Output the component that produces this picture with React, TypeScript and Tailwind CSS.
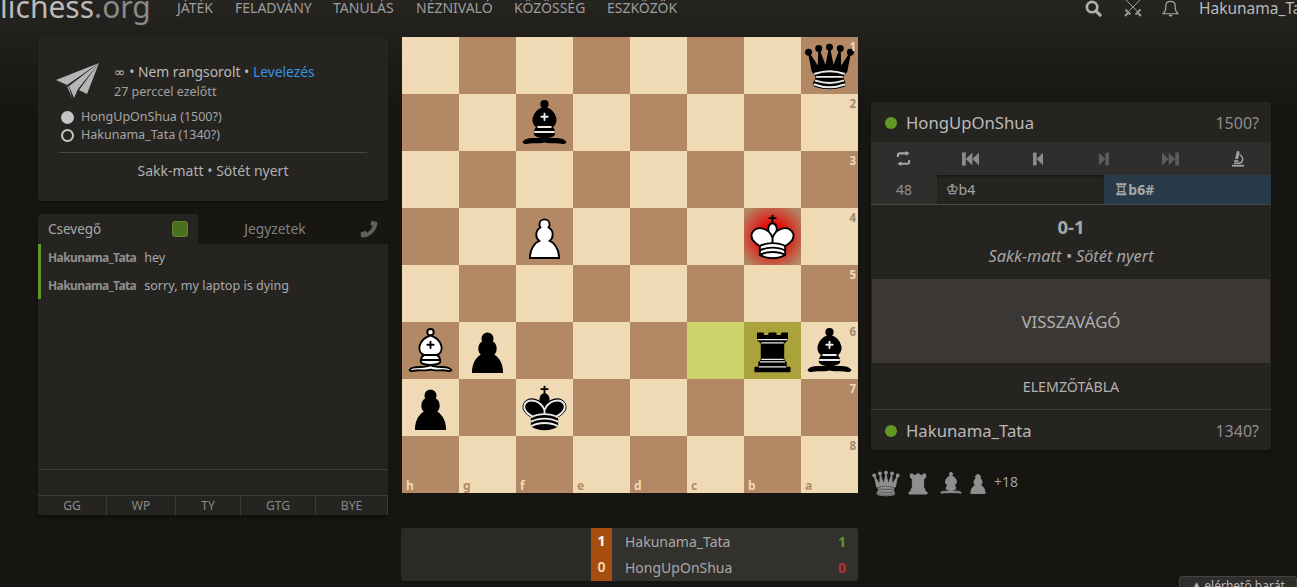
import React from "react";

const font = { fontFamily: '"Noto Sans", "DejaVu Sans", sans-serif' };

type P = { c?: string; i?: string };

const Pawn = ({ c = "#fff", s = "#000" }: { c?: string; s?: string }) => (
  <svg viewBox="0 0 45 45" className="w-full h-full">
    <path d="M22.5 9c-2.21 0-4 1.79-4 4 0 .89.29 1.71.78 2.38C17.33 16.5 16 18.59 16 21c0 2.03.94 3.84 2.41 5.03-3 1.06-7.41 5.55-7.41 13.47h23c0-7.92-4.41-12.41-7.41-13.47 1.47-1.19 2.41-3 2.41-5.03 0-2.41-1.33-4.5-3.28-5.62.49-.67.78-1.49.78-2.38 0-2.21-1.79-4-4-4z" fill={c} stroke={s} strokeWidth="1.5" strokeLinecap="round" />
  </svg>
);

const Bishop = ({ c = "#000", s = "#000", i = "#ececec" }: { c?: string; s?: string; i?: string }) => (
  <svg viewBox="0 0 45 45" className="w-full h-full">
    <g fill="none" fillRule="evenodd" stroke={s} strokeWidth="1.5" strokeLinecap="round" strokeLinejoin="round">
      <g fill={c} strokeLinecap="butt">
        <path d="M9 36c3.39-.97 10.11.43 13.5-2 3.39 2.43 10.11 1.03 13.5 2 0 0 1.65.54 3 2-.68.97-1.65.99-3 .5-3.39-.97-10.11.46-13.5-1-3.39 1.46-10.11.03-13.5 1-1.354.49-2.323.47-3-.5 1.354-1.94 3-2 3-2z" />
        <path d="M15 32c2.5 2.5 12.5 2.5 15 0 .5-1.5 0-2 0-2 0-2.5-2.5-4-2.5-4 5.5-1.5 6-11.5-5-15.5-11 4-10.5 14-5 15.5 0 0-2.5 1.5-2.5 4 0 0-.5.5 0 2z" />
        <path d="M25 8a2.5 2.5 0 1 1-5 0 2.5 2.5 0 1 1 5 0z" />
      </g>
      <path d="M17.5 26h10M15 30h15m-7.5-14.5v5M20 18h5" stroke={i} strokeLinejoin="miter" />
    </g>
  </svg>
);

const KingPath = "M12.5 37c5.5 3.5 14.5 3.5 20 0v-7s9-4.5 6-10.5c-4-6.5-13.5-3.5-16 4V27v-3.5c-2.5-7.5-12-10.5-16-4-3 6 6 10.5 6 10.5v7";
const KingHead = "M22.5 25s4.5-7.5 3-10.5c0 0-1-2.5-3-2.5s-3 2.5-3 2.5c-1.5 3 3 10.5 3 10.5";

const WhiteKing = () => (
  <svg viewBox="0 0 45 45" className="w-full h-full">
    <g fill="none" stroke="#000" strokeWidth="1.5" strokeLinecap="round" strokeLinejoin="round">
      <path d="M22.5 11.63V6M20 8h5" strokeLinejoin="miter" />
      <path d={KingHead} fill="#fff" strokeLinecap="butt" strokeLinejoin="miter" />
      <path d={KingPath} fill="#fff" />
      <path d="M12.5 30c5.5-3 14.5-3 20 0m-20 3.5c5.5-3 14.5-3 20 0m-20 3.5c5.5-3 14.5-3 20 0" />
    </g>
  </svg>
);

const BlackKing = () => (
  <svg viewBox="0 0 45 45" className="w-full h-full">
    <g fill="none" stroke="#000" strokeWidth="1.5" strokeLinecap="round" strokeLinejoin="round">
      <path d="M22.5 11.63V6" strokeLinejoin="miter" />
      <path d={KingHead} fill="#000" strokeLinecap="butt" strokeLinejoin="miter" />
      <path d={KingPath} fill="#000" />
      <path d="M20 8h5" strokeLinejoin="miter" />
      <path d="M32 29.5s8.5-4 6.03-9.65C34.15 14 25 18 22.5 24.5v2.1-2.1C20 18 10.85 14 6.97 19.85 4.5 25.5 13 29.5 13 29.5" stroke="#ececec" />
      <path d="M12.5 30c5.5-3 14.5-3 20 0m-20 3.5c5.5-3 14.5-3 20 0m-20 3.5c5.5-3 14.5-3 20 0" stroke="#ececec" />
    </g>
  </svg>
);

const Queen = ({ c = "#000", i = "#ececec" }: P) => (
  <svg viewBox="0 0 45 45" className="w-full h-full">
    <g fill={c} stroke={c} strokeWidth="1.5" strokeLinecap="round" strokeLinejoin="round">
      <g stroke="none">
        <circle cx="6" cy="12" r="2.75" />
        <circle cx="14" cy="9" r="2.75" />
        <circle cx="22.5" cy="8" r="2.75" />
        <circle cx="31" cy="9" r="2.75" />
        <circle cx="39" cy="12" r="2.75" />
      </g>
      <path d="M9 26c8.5-1.5 21-1.5 27 0l2.5-12.5L31 25l-.3-14.1-5.2 13.6-3-14.5-3 14.5-5.2-13.6L14 25 6.5 13.5 9 26z" strokeLinecap="butt" />
      <path d="M9 26c0 2 1.5 2 2.5 4 1 1.5 1 1 .5 3.5-1.5 1-1.5 2.5-1.5 2.5-1.5 1.5.5 2.5.5 2.5 6.5 1 16.5 1 23 0 0 0 1.5-1 0-2.5 0 0 .5-1.5-1-2.5-.5-2.5-.5-2 .5-3.5 1-2 2.5-2 2.5-4-8.5-1.5-18.5-1.5-27 0z" strokeLinecap="butt" />
      <path d="M11 38.5a35 35 1 0 0 23 0" fill="none" strokeLinecap="butt" />
      <path d="M11 29a35 35 1 0 1 23 0M12.5 31.5h20M11.5 34.5a35 35 1 0 0 22 0M10.5 37.5a35 35 1 0 0 24 0" fill="none" stroke={i} />
    </g>
  </svg>
);

const Rook = ({ c = "#000", i = "#ececec" }: P) => (
  <svg viewBox="0 0 45 45" className="w-full h-full">
    <g fill={c} stroke={c} strokeWidth="1.5" strokeLinecap="round" strokeLinejoin="round">
      <path d="M9 39h27v-3H9v3zM12.5 32l1.5-2.5h17l1.5 2.5h-20zM12 36v-4h21v4H12z" strokeLinecap="butt" />
      <path d="M14 29.5v-13h17v13H14z" strokeLinecap="butt" strokeLinejoin="miter" />
      <path d="M14 16.5L11 14h23l-3 2.5H14zM11 14V9h4v2h5V9h5v2h5V9h4v5H11z" strokeLinecap="butt" />
      <path d="M12 35.5h21M13 31.5h19M14 29.5h17M14 16.5h17M11 14h23" fill="none" stroke={i} strokeWidth="1" strokeLinejoin="miter" />
    </g>
  </svg>
);

const pieces: Record<string, React.ReactNode> = {
  "0-7": <Queen />,
  "1-2": <Bishop />,
  "3-2": <Pawn />,
  "3-6": <WhiteKing />,
  "5-0": <Bishop c="#fff" i="#000" />,
  "5-1": <Pawn c="#000" />,
  "5-6": <Rook />,
  "5-7": <Bishop />,
  "6-0": <Pawn c="#000" />,
  "6-2": <BlackKing />,
};

const files = ["h", "g", "f", "e", "d", "c", "b", "a"];

function Board() {
  const cells = [];
  for (let r = 0; r < 8; r++) {
    for (let c = 0; c < 8; c++) {
      const light = (r + c) % 2 === 0;
      const key = `${r}-${c}`;
      let bg = light ? "bg-[#f0d9b5]" : "bg-[#b28865]";
      if (key === "5-5") bg = "bg-[#cdd26a]";
      if (key === "5-6") bg = "bg-[#aaa23a]";
      cells.push(
        <div key={key} className={`relative w-[57px] h-[57px] ${bg}`}>
          {key === "3-6" && (
            <div className="absolute inset-0 bg-[radial-gradient(ellipse_at_center,rgba(255,0,0,1)_0%,rgba(231,0,0,1)_25%,rgba(169,0,0,0)_89%,rgba(158,0,0,0)_100%)]" />
          )}
          {pieces[key] && <div className="absolute inset-0">{pieces[key]}</div>}
          {c === 7 && (
            <span className={`absolute top-[3px] right-[2px] text-[11.5px] leading-[14px] font-bold ${light ? "text-[#a38a6f]" : "text-[#f0d9b5]"}`}>
              {r + 1}
            </span>
          )}
          {r === 7 && (
            <span className={`absolute bottom-[0px] left-[4px] text-[12px] leading-[14px] font-bold ${light ? "text-[#b28865]" : "text-[#f0d9b5]"}`}>
              {files[c]}
            </span>
          )}
        </div>
      );
    }
  }
  return <div className="grid grid-cols-[repeat(8,57px)] w-[456px] h-[456px]">{cells}</div>;
}

const Plane = () => (
  <svg viewBox="0 0 44 36" className="w-[44px] h-[36px] text-[#b5b5b5]" fill="currentColor">
    <path d="M43 0 L0 17 L11 22 Z" />
    <path d="M43 0 L13 23 L18 35 L22 26 Z" />
    <path d="M43 0 L23 27 L31 31 Z" />
    <path d="M11 23 L16 35 L13 24 Z" />
  </svg>
);

const First = () => (
  <svg viewBox="0 0 18 14" className="w-[17px] h-[14px]" fill="currentColor">
    <rect x="0" y="0" width="4" height="14" />
    <path d="M11 0 L4 7 L11 14 Z" />
    <path d="M18 0 L11 7 L18 14 Z" />
  </svg>
);
const Prev = () => (
  <svg viewBox="0 0 11 14" className="w-[10px] h-[14px]" fill="currentColor">
    <rect x="0" y="0" width="4" height="14" />
    <path d="M11 0 L4 7 L11 14 Z" />
  </svg>
);

const Flip = () => (
  <svg viewBox="0 0 16 16" className="w-[15px] h-[15px]" fill="none" stroke="currentColor" strokeWidth="2.2">
    <path d="M2 6.5 V4.5 Q2 2.5 4 2.5 H11" />
    <path d="M14 9.5 V11.5 Q14 13.5 12 13.5 H5" />
    <path d="M10.5 0 L14.5 2.5 L10.5 5 Z" fill="currentColor" stroke="none" />
    <path d="M5.5 11 L1.5 13.5 L5.5 16 Z" fill="currentColor" stroke="none" />
  </svg>
);

const Microscope = () => (
  <svg viewBox="0 0 14 16" className="w-[14px] h-[17px]" fill="none" stroke="currentColor" strokeWidth="1.4">
    <path d="M8.5 4 Q12.5 6.5 11.5 10 Q10.8 12.5 8 12.8 H3" />
    <path d="M5.5 1 L8 0.5 L8.5 2 L7 8.5 H4 L5.7 2 Z" fill="currentColor" stroke="none" />
    <path d="M3 10.5 H7.5" strokeWidth="1.6" />
    <path d="M1 15.2 H13" strokeWidth="1.8" />
  </svg>
);

const Swords = () => (
  <svg viewBox="0 0 18 18" className="w-[18px] h-[18px]" fill="none" stroke="currentColor" strokeWidth="1">
    <path d="M1 0 L14 13 M17 0 L4 13" />
    <path d="M1.5 10.5 L6.5 15.5 M16.5 10.5 L11.5 15.5" strokeWidth="1.8" />
    <path d="M1 17 L4 14 M17 17 L14 14" strokeWidth="2" />
  </svg>
);

const Search = () => (
  <svg viewBox="0 0 18 18" className="w-[17px] h-[17px]" fill="none" stroke="currentColor">
    <circle cx="7.5" cy="7.5" r="5.5" strokeWidth="2.8" />
    <path d="M11.5 11.5 L16 16" strokeWidth="3.4" strokeLinecap="round" />
  </svg>
);

const Bell = () => (
  <svg viewBox="0 0 18 18" className="w-[17px] h-[17px]" fill="none" stroke="currentColor" strokeWidth="1.2">
    <path d="M1 14.5 Q4 12 4 8 V6.5 Q4 1.5 9 1.5 Q14 1.5 14 6.5 V8 Q14 12 17 14.5 Z" strokeLinejoin="round" />
    <path d="M7 15.5 A2 2 0 0 0 11 15.5 Z" fill="currentColor" stroke="none" />
  </svg>
);

const Phone = () => (
  <svg viewBox="0 0 18 18" className="w-[18px] h-[18px]" fill="currentColor">
    <path d="M11.5 0.8 L16.5 1.8 Q17.5 2 17.4 3.2 Q16.6 10 10.5 15 Q6 17.8 2.2 17.6 Q1 17.4 1 16.5 L0.6 13.4 Q0.6 12.6 1.4 12.3 L5 11 Q5.8 10.8 6.2 11.4 L7.2 12.8 Q11 10.5 12.6 6.2 L10.9 5 Q10.3 4.6 10.5 3.9 L11.5 0.8 Z" />
  </svg>
);

const nav: [string, string][] = [
  ["JÁTÉK", "w-[58px]"],
  ["FELADVÁNY", "w-[98px]"],
  ["TANULÁS", "w-[83px]"],
  ["NÉZNIVALÓ", "w-[98px]"],
  ["KÖZÖSSÉG", "w-[93px]"],
  ["ESZKÖZÖK", "w-[80px]"],
];

const PlayerRow = ({ name, rating, extra }: { name: string; rating: string; extra?: string }) => (
  <div className={`flex items-center h-[40px] pt-[1px] pl-[14px] pr-[12px] ${extra ?? ""}`}>
    <span className="w-[12px] h-[12px] rounded-full bg-[#629924]" />
    <span className="ml-[9px] text-[16.7px] text-[#bababa]">{name}</span>
    <span className="ml-auto text-[16px] text-[#8d8d8c]">{rating}</span>
  </div>
);

export default function App() {
  return (
    <div
      style={font}
      className="relative w-[1297px] h-[587px] overflow-hidden bg-[linear-gradient(to_bottom,#262421_0px,#161512_116px)] text-[#bababa]"
    >
      <header className="flex items-start h-[37px] relative">
        <div className="-mt-[13px] w-[177px] text-[30px] leading-[40px] text-[#bababa] shrink-0">
          <span className="text-[#bababa]">lichess</span>
          <span className="text-[#8a8a88]">.org</span>
        </div>
        <nav className="flex items-center h-[15px] text-[14px] text-[#9d9d9b]">
          {nav.map(([t, w]) => (
            <span key={t} className={w}>{t}</span>
          ))}
        </nav>
        <div className="ml-auto flex items-center h-[16px] text-[#b0b0ae] -mr-[12px] w-[224px] shrink-0">
          <span><Search /></span>
          <span className="ml-[22px] text-[#9a9a98]"><Swords /></span>
          <span className="ml-[20px] text-[#a8a8a6]"><Bell /></span>
          <span className="ml-[20px] text-[15.5px] leading-[14px] text-[#bababa] whitespace-nowrap">Hakunama_Tata</span>
        </div>
      </header>

      <main className="flex items-start pl-[38px]">
        {/* left column */}
        <div className="w-[350px] flex flex-col gap-[13px] shrink-0">
          <section className="h-[164px] bg-[#262421] rounded-[3px] shadow-[0_2px_2px_rgba(0,0,0,0.3)] px-[21px] pt-[23px]">
            <div className="flex items-center h-[42px]">
              <div className="-ml-[3px]"><Plane /></div>
              <div className="ml-[14px] flex flex-col">
                <div className="text-[13.85px] leading-[20px] text-[#bababa]">
                  ∞ • Nem rangsorolt • <span className="text-[#3692e7]">Levelezés</span>
                </div>
                <div className="text-[12.5px] leading-[19px] text-[#a0a0a0]">27 perccel ezelőtt</div>
              </div>
            </div>
            <div className="mt-[6px] text-[12.5px] leading-[18px] text-[#a5a5a5]">
              <div className="flex items-center pl-[2px]">
                <span className="w-[13px] h-[13px] rounded-full bg-[#c5c5c8]" />
                <span className="ml-[7px]">HongUpOnShua (1500?)</span>
              </div>
              <div className="flex items-center pl-[2px]">
                <span className="w-[13px] h-[13px] rounded-full border-[2px] border-[#c5c5c8]" />
                <span className="ml-[7px]">Hakunama_Tata (1340?)</span>
              </div>
            </div>
            <div className="mt-[8px] border-t border-[#4a4845] pt-[8px] text-center text-[14px] leading-[20px] text-[#b0b0b0]">
              Sakk-matt • Sötét nyert
            </div>
          </section>

          <section className="h-[301px] bg-[#262421] rounded-[3px] shadow-[0_2px_2px_rgba(0,0,0,0.3)] flex flex-col">
            <div className="flex h-[30px] bg-[#171613] shrink-0">
              <div className="w-[160px] bg-[#262421] flex items-center pl-[10px] pr-[10px] rounded-tl-[3px] text-[13.5px] text-[#a8a8a8]">
                <span>Csevegő</span>
                <span className="ml-auto w-[16px] h-[16px] rounded-[3px] bg-[#4a6f1e] border border-[#62852f]" />
              </div>
              <div className="flex-1 flex items-center justify-center text-[13.8px] text-[#808080] pr-[8px]">Jegyzetek</div>
              <div className="flex items-center pr-[10px] text-[#5f5f5d]"><Phone /></div>
            </div>
            <div className="h-[55px] border-l-[3px] border-[#629924] pl-[7px] text-[12.6px] text-[#a9a9a9] shrink-0">
              <div className="h-[28px] flex items-center">
                <span className="font-bold text-[12px] text-[#8f8f8f] tracking-[-0.6px]">Hakunama_Tata</span>
                <span className="ml-[8px]">hey</span>
              </div>
              <div className="h-[28px] flex items-center">
                <span className="font-bold text-[12px] text-[#8f8f8f] tracking-[-0.6px]">Hakunama_Tata</span>
                <span className="ml-[8px]">sorry, my laptop is dying</span>
              </div>
            </div>
            <div className="flex-1" />
            <div className="h-[26px] border-t border-[#3d3b38] shrink-0" />
            <div className="h-[20px] border-t border-[#3d3b38] flex text-[12px] text-[#8a8a8a] shrink-0">
              {[
                ["GG", "w-[69px]"],
                ["WP", "w-[69px]"],
                ["TY", "w-[65px]"],
                ["GTG", "w-[75px]"],
                ["BYE", "flex-1"],
              ].map(([t, w]) => (
                <div key={t} className={`${w} flex items-center justify-center border-r border-[#3d3b38]`}>{t}</div>
              ))}
            </div>
          </section>
        </div>

        {/* board column */}
        <div className="ml-[14px] w-[457px] shrink-0 flex flex-col">
          <Board />
          <div className="mt-[35px] -ml-[1px] h-[53px] w-[457px] flex rounded-[3px] overflow-hidden bg-[#2b2a27] text-[14px]">
            <div className="w-[190px]" />
            <div className="w-[21px] bg-[#a84d10] flex flex-col font-bold text-center text-[14px]">
              <div className="h-[26px] leading-[26px] text-white">1</div>
              <div className="h-[27px] leading-[26px] text-[#f5deb3] font-semibold">0</div>
            </div>
            <div className="flex-1 bg-[#33312e] pl-[13px] pr-[12px] text-[#a8a8a8]">
              <div className="h-[26px] flex items-center justify-between">
                <span>Hakunama_Tata</span>
                <span className="font-bold text-[#629924]">1</span>
              </div>
              <div className="h-[26px] flex items-center justify-between">
                <span>HongUpOnShua</span>
                <span className="font-bold text-[#b33430]">0</span>
              </div>
            </div>
          </div>
        </div>

        {/* right column */}
        <div className="ml-[12px] w-[400px] mt-[65px] shrink-0">
          <section className="h-[348px] bg-[#262421] rounded-[3px] shadow-[0_2px_2px_rgba(0,0,0,0.3)] flex flex-col">
            <PlayerRow name="HongUpOnShua" rating="1500?" />
            <div className="h-[33px] bg-[#302e2c] grid grid-cols-6 items-center justify-items-center shrink-0">
              <span className="text-[#a5a5a5] -ml-[1px]"><Flip /></span>
              <span className="text-[#8b8b8b]"><First /></span>
              <span className="text-[#8b8b8b]"><Prev /></span>
              <span className="text-[#5c5c5a] rotate-180"><Prev /></span>
              <span className="text-[#5c5c5a] rotate-180"><First /></span>
              <span className="text-[#a5a5a5]"><Microscope /></span>
            </div>
            <div className="h-[30px] flex border-b border-[#4a4845] shrink-0 text-[14px]">
              <div className="w-[66px] bg-[#302e2c] flex items-center justify-center text-[#8f8f8f]">48</div>
              <div className="w-[167px] flex items-center pl-[9px] text-[#a5a5a5] shadow-[inset_0_2px_2px_rgba(0,0,0,0.3)]">
                <span className="font-['DejaVu_Sans'] text-[14px] [-webkit-text-stroke:0.3px_currentColor]">♔</span>
                <span>b4</span>
              </div>
              <div className="flex-1 bg-[#293a49] flex items-center pl-[10px] font-bold text-[#a8a8a8]">
                <span className="font-['DejaVu_Sans'] text-[16px] font-normal [-webkit-text-stroke:0.6px_currentColor]">♖</span>
                <span>b6#</span>
              </div>
            </div>
            <div className="h-[74px] flex flex-col items-center shrink-0">
              <div className="mt-[10px] text-[18.5px] leading-[24px] font-bold text-[#a8a8a8]">0-1</div>
              <div className="mt-[7px] text-[16.3px] leading-[20px] italic text-[#a5a5a5]">Sakk-matt • Sötét nyert</div>
            </div>
            <div className="h-[84px] pt-[1px] bg-[#3a3734] mx-[1px] flex items-center justify-center text-[16.8px] text-[#b0b0b0] shrink-0">VISSZAVÁGÓ</div>
            <div className="h-[46px] pt-[1px] flex items-center justify-center text-[14.2px] text-[#b0b0b0] shrink-0">ELEMZŐTÁBLA</div>
            <PlayerRow name="Hakunama_Tata" rating="1340?" extra="border-t border-[#3d3b38] h-[41px]" />
          </section>
          <div className="mt-[19px] flex items-center h-[28px] pl-[1px] text-[#8f8f8f]">
            <div className="w-[32px] h-[32px] -ml-[2px]"><Queen c="#8f8f8f" i="#5e5e5e" /></div>
            <div className="w-[30px] h-[30px] ml-[1px] -mr-[2px]"><Rook c="#8f8f8f" i="#8f8f8f" /></div>
            <div className="w-[28px] h-[28px] ml-[6px]"><Bishop c="#8f8f8f" s="#8f8f8f" i="#8f8f8f" /></div>
            <div className="w-[28px] h-[28px] -ml-[1px]"><Pawn c="#8f8f8f" s="#8f8f8f" /></div>
            <span className="text-[14px] ml-[2px] -mt-[4px] text-[#a0a0a0]">+18</span>
          </div>
        </div>
      </main>

      <div className="absolute right-0 top-[576px] w-[118px] h-[30px] bg-[#302e2c] border border-[#45433f] rounded-t-[3px] pl-[12px] text-[12px] leading-[18px] text-[#bababa] whitespace-nowrap">
        ▲ elérhető barát
      </div>
    </div>
  );
}
